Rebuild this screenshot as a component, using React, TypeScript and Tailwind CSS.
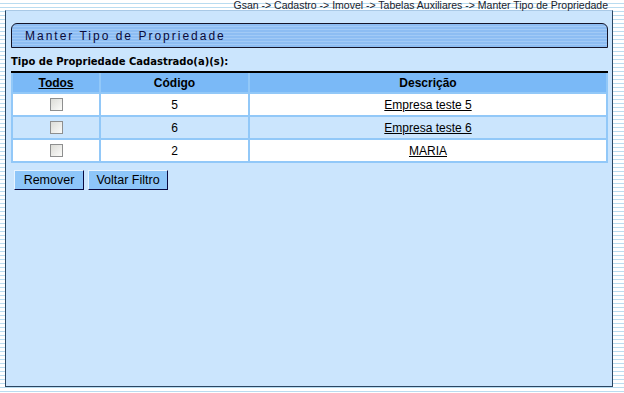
import React from 'react';

const rows = [
  { codigo: '5', descricao: 'Empresa teste 5', bg: 'bg-white' },
  { codigo: '6', descricao: 'Empresa teste 6', bg: 'bg-[#cbe5fd]' },
  { codigo: '2', descricao: 'MARIA', bg: 'bg-white' },
];

const Checkbox: React.FC = () => (
  <span className="inline-block w-[13px] h-[13px] border border-[#8e8f8f] bg-[linear-gradient(135deg,#dcdcd7,#fbfbf9)]" />
);

const App: React.FC = () => {
  return (
    <div className="w-[624px] h-[393px] overflow-hidden bg-[repeating-linear-gradient(to_bottom,#ffffff_0px,#ffffff_3px,#b9dcf0_3px,#b9dcf0_4px)] font-['Liberation_Sans',Arial,sans-serif]">
      <div className="h-[10px] pr-[16px] text-right text-[10.5px] leading-[11px] text-[#1c1c2c] whitespace-nowrap">
        Gsan -&gt; Cadastro -&gt; Imovel -&gt; Tabelas Auxiliares -&gt; Manter Tipo de Propriedade
      </div>

      <div className="ml-[5px] w-[608px] h-[377px] bg-[#cbe5fd] border border-[#2a4662] border-t-[#a9c9e6] pt-[12px] pl-[5px] pr-[5px]">
        <div className="h-[25px] w-[597px] border border-[#141428] rounded-tl-[6px] rounded-tr-[6px] bg-[repeating-linear-gradient(to_bottom,#8dbdf3_0px,#8dbdf3_2px,#a2caf6_2px,#a2caf6_3px)] pl-[13px] flex items-center">
          <span className="text-[12px] tracking-[2px] text-[#0a0a3a]">
            Manter Tipo de Propriedade
          </span>
        </div>

        <div className="mt-[8px] h-[15px] font-['DejaVu_Sans',Verdana,sans-serif] font-bold text-[10px] leading-[12px] text-black">
          Tipo de Propriedade Cadastrado(a)(s):
        </div>

        <div className="w-[597px] h-[2px] bg-black" />
        <div className="w-[597px] grid grid-cols-[86px_147px_1fr] gap-[2px] px-[2px] pb-[2px] bg-[#92c8f8] text-[12px] text-black">
          <div className="h-[19px] bg-[#7ab9f7] flex items-center justify-center font-bold underline">Todos</div>
          <div className="h-[19px] bg-[#7ab9f7] flex items-center justify-center font-bold">Código</div>
          <div className="h-[19px] bg-[#7ab9f7] flex items-center justify-center font-bold">Descrição</div>
          {rows.map(r => (
            <React.Fragment key={r.codigo}>
              <div className={`h-[21px] ${r.bg} flex items-center justify-center`}>
                <Checkbox />
              </div>
              <div className={`h-[21px] ${r.bg} flex items-center justify-center`}>{r.codigo}</div>
              <div className={`h-[21px] ${r.bg} flex items-center justify-center`}>
                <span className="underline">{r.descricao}</span>
              </div>
            </React.Fragment>
          ))}
        </div>

        <div className="mt-[7px] ml-[3px] flex gap-[4px]">
          <button className="w-[70px] h-[20px] bg-[#8ec6f9] border border-t-[#e8f4ff] border-l-[#e8f4ff] border-b-[#0a0a40] border-r-[#0a0a40] text-[12.5px] leading-[16px] text-black">
            Remover
          </button>
          <button className="w-[80px] h-[20px] bg-[#8ec6f9] border border-t-[#e8f4ff] border-l-[#e8f4ff] border-b-[#0a0a40] border-r-[#0a0a40] text-[12.5px] leading-[16px] text-black">
            Voltar Filtro
          </button>
        </div>
      </div>
    </div>
  );
};

export default App;
